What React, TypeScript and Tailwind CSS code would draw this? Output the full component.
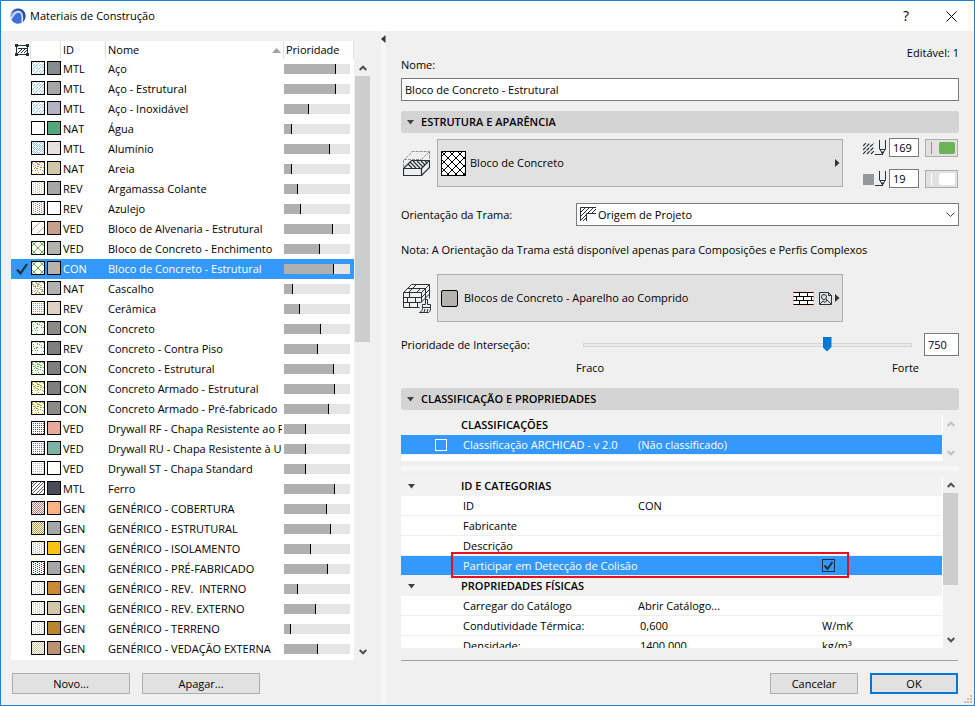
import { useState } from 'react'

type Hatch = 'none' | 'diag' | 'dense' | 'wide' | 'pairs' | 'cross' | 'dots' | 'stagger' | 'checker' | 'sand' | 'gravel' | 'specks' | 'grains'

interface Material {
    id: string
    name: string
    hatch: Hatch
    ink: string
    surface: string
    priority: number
}

const materials: Material[] = [
    { id: 'MTL', name: 'Aço', hatch: 'diag', ink: '#8fc2ee', surface: '#868c8e', priority: 51 },
    { id: 'MTL', name: 'Aço - Estrutural', hatch: 'diag', ink: '#8fc2ee', surface: '#a6a6a6', priority: 51 },
    { id: 'MTL', name: 'Aço - Inoxidável', hatch: 'diag', ink: '#8fc2ee', surface: '#b4b3c4', priority: 24 },
    { id: 'NAT', name: 'Água', hatch: 'none', ink: '#ffffff', surface: '#54a77a', priority: 7 },
    { id: 'MTL', name: 'Alumínio', hatch: 'dense', ink: '#8fc2ee', surface: '#e9e1e0', priority: 45 },
    { id: 'NAT', name: 'Areia', hatch: 'sand', ink: '#c08a3a', surface: '#d1c6a8', priority: 7 },
    { id: 'REV', name: 'Argamassa Colante', hatch: 'stagger', ink: '#c0c0a0', surface: '#a6a6a6', priority: 13 },
    { id: 'REV', name: 'Azulejo', hatch: 'stagger', ink: '#e8783c', surface: '#ffffff', priority: 16 },
    { id: 'VED', name: 'Bloco de Alvenaria - Estrutural', hatch: 'wide', ink: '#f0a070', surface: '#c4a08a', priority: 48 },
    { id: 'VED', name: 'Bloco de Concreto - Enchimento', hatch: 'cross', ink: '#6ab04c', surface: '#b4b3ad', priority: 35 },
    { id: 'CON', name: 'Bloco de Concreto - Estrutural', hatch: 'cross', ink: '#6ab04c', surface: '#b4b3ad', priority: 49 },
    { id: 'NAT', name: 'Cascalho', hatch: 'gravel', ink: '#c0a67c', surface: '#b2b2b2', priority: 8 },
    { id: 'REV', name: 'Cerâmica', hatch: 'dots', ink: '#f0824a', surface: '#dfd1c4', priority: 15 },
    { id: 'CON', name: 'Concreto', hatch: 'specks', ink: '#6ab04c', surface: '#8e8a85', priority: 36 },
    { id: 'REV', name: 'Concreto - Contra Piso', hatch: 'specks', ink: '#6ab04c', surface: '#7f7f7f', priority: 33 },
    { id: 'CON', name: 'Concreto - Estrutural', hatch: 'grains', ink: '#6ab04c', surface: '#7f7f7f', priority: 49 },
    { id: 'CON', name: 'Concreto Armado - Estrutural', hatch: 'grains', ink: '#aaaa14', surface: '#7f7f7f', priority: 50 },
    { id: 'CON', name: 'Concreto Armado - Pré-fabricado', hatch: 'grains', ink: '#aaaa14', surface: '#8e8a85', priority: 44 },
    { id: 'VED', name: 'Drywall RF - Chapa Resistente ao Fogo', hatch: 'dots', ink: '#c83232', surface: '#e8aa9b', priority: 21 },
    { id: 'VED', name: 'Drywall RU - Chapa Resistente à Umidade', hatch: 'dots', ink: '#28a878', surface: '#7db3a6', priority: 21 },
    { id: 'VED', name: 'Drywall ST - Chapa Standard', hatch: 'dots', ink: '#bebebe', surface: '#ffffff', priority: 21 },
    { id: 'MTL', name: 'Ferro', hatch: 'pairs', ink: '#606060', surface: '#4a4d58', priority: 50 },
    { id: 'GEN', name: 'GENÉRICO - COBERTURA', hatch: 'checker', ink: '#c87878', surface: '#ffb084', priority: 42 },
    { id: 'GEN', name: 'GENÉRICO - ESTRUTURAL', hatch: 'checker', ink: '#b4a03c', surface: '#a6a6a6', priority: 46 },
    { id: 'GEN', name: 'GENÉRICO - ISOLAMENTO', hatch: 'stagger', ink: '#dcb43c', surface: '#fac30f', priority: 26 },
    { id: 'GEN', name: 'GENÉRICO - PRÉ-FABRICADO', hatch: 'stagger', ink: '#783c46', surface: '#a6a6a6', priority: 43 },
    { id: 'GEN', name: 'GENÉRICO - REV.  INTERNO', hatch: 'stagger', ink: '#c8c8b4', surface: '#ca8a32', priority: 13 },
    { id: 'GEN', name: 'GENÉRICO - REV. EXTERNO', hatch: 'stagger', ink: '#c8c8a0', surface: '#d1c6a8', priority: 31 },
    { id: 'GEN', name: 'GENÉRICO - TERRENO', hatch: 'stagger', ink: '#c8c8b4', surface: '#b8872d', priority: 6 },
    { id: 'GEN', name: 'GENÉRICO - VEDAÇÃO EXTERNA', hatch: 'checker', ink: '#d2c8a0', surface: '#bc9272', priority: 33 },
]

// fixed pseudo random value per pixel, for the loose fills
const noise = (x: number, y: number) => Math.abs(Math.sin(x * 12.9 + y * 78.2) * 43758) % 1

const hatchTests: Record<Hatch, (x: number, y: number) => boolean> = {
    none: () => false,
    diag: (x, y) => (x + y) % 6 === 1 || ((x + y) % 6 === 4 && x % 3 !== 0),
    dense: (x, y) => (x + y) % 4 === 1 || ((x + y) % 4 === 3 && x % 3 !== 0),
    wide: (x, y) => (x + y) % 9 === 7,
    pairs: (x, y) => (x + y) % 7 === 1 || (x + y) % 7 === 4,
    cross: (x, y) => (x + y) % 8 === 3 || (x - y + 24) % 8 === 0,
    dots: (x, y) => x % 2 === 1 && y % 2 === 1,
    stagger: (x, y) => x % 2 === 1 && y % 2 === (x % 4 === 1 ? 0 : 1),
    checker: (x, y) => (x + y) % 2 === 0,
    sand: (x, y) => noise(x, y) < 0.22,
    gravel: (x, y) => noise(x, y) < 0.42,
    specks: (x, y) => noise(x, y) < 0.12 || (y === 5 && x > 3 && x < 6),
    grains: (x, y) => noise(x, y) < 0.27,
}

function hatchPath(kind: Hatch, size: number) {
    let d = ''
    for (let y = 0; y < size; y++) {
        for (let x = 0; x < size; x++) {
            if (hatchTests[kind](x, y)) d += `M${x + 1} ${y + 1}h1v1h-1z`
        }
    }
    return d
}

function Swatch({ hatch, ink, fill }: { hatch: Hatch; ink: string; fill: string }) {
    return (
        <svg width="14" height="14" viewBox="0 0 14 14" shapeRendering="crispEdges" aria-hidden="true">
            <rect x="0.5" y="0.5" width="13" height="13" fill={fill} stroke="#000" />
            <path d={hatchPath(hatch, 12)} fill={ink} />
        </svg>
    )
}

function Logo() {
    return (
        <svg width="16" height="16" viewBox="0 0 16 16" aria-hidden="true">
            <circle cx="8" cy="8" r="7.7" fill="#7ea2e4" />
            <path d="M7 .8C12 0 15.500 3.500 15.500 8c0 2.500-1 4.700-2.600 6C14 7.500 12.500 3.500 8.500 2.500 5.500 2 3 3.500 1.500 5.500 2.500 3 4.500 1.200 7 .8z" fill="#2c4fa3" />
            <path d="M1.800 12.200C4 7.500 6.500 5 9 4.800c2.500.2 3.200 3.500 2.300 9.800A7.600 7.600 0 0 1 1.800 12.200z" fill="#3d6fd8" />
            <path d="M.8 11C3 6.500 6 3.700 8.800 3.600c3 .2 4 3.900 3.400 10.300" fill="none" stroke="#e6edfa" strokeWidth="1.300" />
        </svg>
    )
}

function HatchHeaderIcon() {
    return (
        <svg width="14" height="12" viewBox="0 0 14 12" shapeRendering="crispEdges" aria-hidden="true">
            <path d="M0 0h3v3H0zM11 0h3v3h-3zM0 9h3v3H0zM11 9h3v3h-3zM3 1h8v1H3zM1 3h1v6H1zM12 3h1v6h-1zM3 10h8v1H3zM3 4h9v1H3z" fill="#26313a" />
            <path d="M3 9l4-4M6 9l4-4M9 9l3-3" stroke="#26313a" />
        </svg>
    )
}

function Check() {
    return (
        <svg width="12" height="12" viewBox="0 0 12 12" aria-hidden="true">
            <path d="M1 6.500l3.500 4L11 1" fill="none" stroke="#1f2f3c" strokeWidth="2.200" />
        </svg>
    )
}

function FillBlockIcon() {
    return (
        <svg width="27" height="25" viewBox="0 0 27 25" fill="none" stroke="#26313a" aria-hidden="true">
            <path d="M.5 9.500l8-8M8.500.5h18M26.500.5v8M.5 9v8M1 8.500h17M18.500 8.500l8-8" stroke="#8a9298" strokeDasharray="3 1" />
            <path d="M.5 17.500h18v7H.5zM.5 17.500l8-8h18l-8 8M26.500 9.500v7l-8 8" strokeWidth="1.200" />
            <path d="M5 13l4 4M7 11l6 6M10 10l7 7M14 10l6 6M18 10l4 4M22 10l2 2" strokeWidth="1.200" />
        </svg>
    )
}

function BrickPaintIcon() {
    return (
        <svg width="28" height="29" viewBox="0 0 28 29" fill="none" stroke="#26313a" aria-hidden="true">
            <path d="M18.500 18V8.500H.5v15h16M.5 13.500h18M.5 18.500h18M6.500 8.500v5M12.500 13.500v5M4.500 13.500v5M6.500 18.500v5M14.500 18.500v5" />
            <path d="M.5 8.500l8-8h18v14M18.500 8.500l8-8M4.500 4.500h18M13.500.5l-4 4M17.500 4.500l-4 4M9.500 4.500l-4 4M22.500 4.500v12M18.500 13.500l8-8M18.500 18l8-8" />
            <path d="M22.500 20.500v-5h2v5h3v3h-8v-3zM19.500 23.500c0 3-1 4-3 5h9c2-1 2-3 2-5M21 28l1-3M24 28l1-3" fill="#f0f0f0" />
        </svg>
    )
}

function CrossHatchPreview() {
    return (
        <svg width="25" height="25" viewBox="0 0 25 25" shapeRendering="crispEdges" aria-hidden="true">
            <rect x="0.5" y="0.5" width="24" height="24" rx="1" fill="#fff" stroke="#000" />
            <path d={hatchPath('cross', 23)} />
        </svg>
    )
}

function PenIcon({ solid }: { solid?: boolean }) {
    return (
        <svg width="24" height="15" viewBox="0 0 24 15" fill="none" stroke="#26313a" aria-hidden="true">
            {solid ? (
                <path d="M0 3h11v11H0z" fill="#93989b" stroke="none" />
            ) : (
                <path d="M0 6l3-3M0 10l7-7M0 14L11 3M4 14l7-7M8 14l3-3" strokeDasharray="4 1" strokeWidth="1.200" />
            )}
            <path d="M12 14.500h8" />
            <path d="M16.500 0v9l3 4.500 3-4.500V0M17 9.500h5" />
            <path d="M18.500 12h2l-1 2z" fill="#26313a" />
        </svg>
    )
}

function OriginIcon() {
    return (
        <svg width="16" height="14" viewBox="0 0 16 14" fill="none" stroke="#26313a" aria-hidden="true">
            <path d="M.5 14V.5H16M6.500 14V6.500H16" />
            <path d="M1 5l4-4M1 9l8-8M1 13l5-5M3 14l3-3M8 6l5-5M12 6l4-4" />
        </svg>
    )
}

function BricksIcon() {
    return (
        <svg width="21" height="15" viewBox="0 0 21 15" shapeRendering="crispEdges" aria-hidden="true">
            <rect width="21" height="15" fill="#fff" />
            <path d="M0 1.500h21M0 5.500h21M0 9.500h21M0 13.500h21M6.500 1v4M14.500 1v4M3.500 5v4M10.500 5v4M18.500 5v4M6.500 9v4M14.500 9v4" stroke="#000" />
            <path d="M.5.500h20v14H.5z" fill="none" stroke="#ff9c9c" strokeOpacity="0.5" />
        </svg>
    )
}

function TextureIcon() {
    return (
        <svg width="13" height="13" viewBox="0 0 13 13" fill="none" stroke="#26313a" aria-hidden="true">
            <path d="M.5.500h9l3 3v9H.5zM9.500.500v3h3" />
            <circle cx="5" cy="5" r="2.500" />
            <path d="M1 12l3-3 2 1.500L8 8l4 4M7 7l2 2" />
        </svg>
    )
}

function Triangle({ dir }: { dir: 'down' | 'right' | 'left' | 'up' }) {
    if (dir === 'right') {
        return <svg width="5" height="8" viewBox="0 0 5 8" aria-hidden="true"><path d="M0 0l4.500 4L0 8z" fill="#333" /></svg>
    }
    if (dir === 'left') {
        return <svg width="5" height="8" viewBox="0 0 5 8" aria-hidden="true"><path d="M4.500 0L0 4l4.500 4z" fill="#333" /></svg>
    }
    if (dir === 'up') {
        return <svg width="9" height="5" viewBox="0 0 9 5" aria-hidden="true"><path d="M0 5l4.500-5L9 5z" fill="#a0a0a0" /></svg>
    }
    return <svg width="7" height="5" viewBox="0 0 7 5" aria-hidden="true"><path d="M0 0h7L3.500 4.500z" fill="#404040" /></svg>
}

function ScrollArrow({ up, muted, label }: { up?: boolean; muted?: boolean; label: string }) {
    return (
        <button type="button" aria-label={label} className="flex h-4 w-full shrink-0 items-center justify-center">
            <svg width="8" height="6" viewBox="0 0 8 6" fill="none" stroke={muted ? '#bfbfbf' : '#505050'} strokeWidth="2" aria-hidden="true">
                <path d={up ? 'M.7 5L4 1.700 7.300 5' : 'M.7 1L4 4.300 7.300 1'} />
            </svg>
        </button>
    )
}

function SectionHeader({ title }: { title: string }) {
    return (
        <h2 className="flex h-[22px] items-center gap-[7px] rounded-[3px] bg-[#d4d4d4] pl-[6px] font-semibold">
            <Triangle dir="down" />
            {title}
        </h2>
    )
}

function MaterialList({ selected, onSelect }: { selected: number; onSelect: (i: number) => void }) {
    return (
        <div className="flex">
            <div className="w-[343px] bg-white pb-px">
                <table className="w-full table-fixed border-separate border-spacing-0">
                    <colgroup>
                        <col className="w-5" />
                        <col className="w-[30px]" />
                        <col className="w-[45px]" />
                        <col className="w-[178px]" />
                        <col className="w-[70px]" />
                    </colgroup>
                    <thead>
                        <tr className="h-[18px] text-left leading-[18px]">
                            <th aria-label="Trama" className="border-r border-[#e0e0e0] p-0">
                                <div className="flex justify-end pr-px"><HatchHeaderIcon /></div>
                            </th>
                            <th aria-label="Superfície" className="border-r border-[#e0e0e0] p-0" />
                            <th className="border-r border-[#e0e0e0] p-0 pl-[2px] font-normal">ID</th>
                            <th className="border-r border-[#e0e0e0] p-0 pl-[2px] font-normal">
                                <div className="flex items-center justify-between pr-[2px]">Nome <Triangle dir="up" /></div>
                            </th>
                            <th className="border-r border-[#e0e0e0] p-0 pl-[2px] font-normal">Prioridade</th>
                        </tr>
                    </thead>
                    <tbody>
                        {materials.map((m, i) => (
                            <tr
                                key={m.name}
                                onClick={() => onSelect(i)}
                                aria-selected={i === selected}
                                className={i === selected ? 'h-5 bg-[#3399ff] text-white' : 'h-5'}
                            >
                                <td className="p-0">{i === selected && <div className="flex justify-center pl-[2px]"><Check /></div>}</td>
                                <td className="p-0">
                                    <div className="-mt-[2px] flex gap-[2px]">
                                        <Swatch hatch={m.hatch} ink={m.ink} fill="#ffffff" />
                                        <Swatch hatch="none" ink={m.ink} fill={m.surface} />
                                    </div>
                                </td>
                                <td className="p-0 pl-[2px] leading-5">{m.id}</td>
                                <td className="p-0 pr-[2px] pl-[2px] leading-5">
                                    <div className="overflow-hidden whitespace-pre">{m.name}</div>
                                </td>
                                <td className="p-0">
                                    <div className="flex h-[10px] w-[66px] bg-[#e5e5e5]">
                                        <div className="border-r border-black bg-[#b0b0b0]" style={{ width: m.priority + 1 }} />
                                    </div>
                                </td>
                            </tr>
                        ))}
                    </tbody>
                </table>
            </div>
            <div className="ml-px flex w-[15px] flex-col pt-[19px]">
                <ScrollArrow up label="Rolar lista para cima" />
                <div className="h-[266px] bg-[#cdcdcd]" />
                <div className="flex-1" />
                <ScrollArrow label="Rolar lista para baixo" />
            </div>
        </div>
    )
}

function GroupRow({ title, arrow = true }: { title: string; arrow?: boolean }) {
    return (
        <tr className="h-5 bg-[#f2f2f2]">
            <td className="p-0 pl-[7px]">{arrow && <Triangle dir="down" />}</td>
            <th colSpan={3} className="p-0 text-left leading-5 font-semibold">{title}</th>
        </tr>
    )
}

function PropertyRow({ label, value, unit }: { label: string; value?: string; unit?: React.ReactNode }) {
    return (
        <tr className="h-5 leading-[19px]">
            <td className="border-b border-[#efefef] p-0" />
            <td className="border-b border-[#efefef] p-0 pl-[2px]">{label}</td>
            <td className={unit ? 'border-b border-[#efefef] p-0 pl-[2px]' : 'border-b border-[#efefef] p-0'}>{value}</td>
            <td className="border-b border-[#efefef] p-0">{unit}</td>
        </tr>
    )
}

function PropertyCols() {
    return (
        <colgroup>
            <col className="w-[60px]" />
            <col className="w-[177px]" />
            <col className="w-[184px]" />
            <col />
        </colgroup>
    )
}

function PushButton({ children, className }: { children: string; className: string }) {
    return (
        <button type="button" className={`h-[21px] bg-[#e1e1e1] text-center leading-none ${className}`}>
            {children}
        </button>
    )
}

export default function App() {
    const [selected, setSelected] = useState(10)
    const [name, setName] = useState('Bloco de Concreto - Estrutural')
    const [priority, setPriority] = useState(750)
    const [collision, setCollision] = useState(true)

    return (
        <div className="relative flex min-h-screen flex-col border border-[#1883d7] bg-[#f0f0f0] font-['Open_Sans','Noto_Sans',sans-serif] text-[11px] leading-4 text-black">
            <header className="flex h-[30px] items-center bg-white pl-[9px]">
                <Logo />
                <h1 className="ml-[4px] flex-1">Materiais de Construção</h1>
                <button type="button" aria-label="Ajuda" className="w-[46px] text-center text-sm">?</button>
                <button type="button" aria-label="Fechar" className="flex w-[45px] justify-center">
                    <svg width="11" height="11" viewBox="0 0 11 11" stroke="#000" aria-hidden="true">
                        <path d="M.5.500l10 10M10.500.500l-10 10" />
                    </svg>
                </button>
            </header>

            <div className="flex flex-1">
                <aside className="w-[380px] shrink-0 pt-[10px] pl-[10px]">
                    <MaterialList selected={selected} onSelect={setSelected} />
                    <div className="mt-[13px] flex gap-3 pl-px">
                        <PushButton className="w-[118px] border border-[#adadad]">Novo...</PushButton>
                        <PushButton className="w-[118px] border border-[#adadad]">Apagar...</PushButton>
                    </div>
                </aside>

                <div className="w-[5px] shrink-0 bg-[#f6f6f6] pt-1">
                    <Triangle dir="left" />
                </div>

                <main className="min-w-0 flex-1 pt-[14px] pr-[15px] pb-[11px] pl-[15px]">
                    <div className="flex items-start justify-between">
                        <label htmlFor="name" className="pt-3">Nome:</label>
                        <span>Editável: 1</span>
                    </div>
                    <input
                        id="name"
                        value={name}
                        onChange={e => setName(e.target.value)}
                        className="mt-[5px] block h-[23px] w-full border border-[#7a7a7a] bg-white px-[3px] outline-none"
                    />

                    <div className="mt-[10px]">
                        <SectionHeader title="ESTRUTURA E APARÊNCIA" />
                    </div>

                    <div className="mt-[5px] flex h-[50px] items-center">
                        <div className="w-9 shrink-0 pl-[2px]"><FillBlockIcon /></div>
                        <button type="button" className="flex h-12 flex-1 items-center border border-[#adadad] bg-[#e1e1e1] pr-[2px] pl-[3px] text-left">
                            <CrossHatchPreview />
                            <span className="ml-1 flex-1">Bloco de Concreto</span>
                            <Triangle dir="right" />
                        </button>
                        <div className="ml-5 flex h-full w-24 flex-col justify-between">
                            <div className="flex items-center">
                                <PenIcon />
                                <input aria-label="Caneta da trama" defaultValue="169" className="ml-[2px] h-[19px] w-[30px] border border-[#7a7a7a] bg-white pl-[3px] outline-none" />
                                <button type="button" aria-label="Cor da caneta da trama" className="ml-[6px] flex h-[18px] w-[33px] items-center border border-[#adadad] bg-[#e1e1e1] pl-[5px]">
                                    <span className="h-3 w-px bg-[#6bb356]" />
                                    <span className="ml-[7px] h-3 w-4 rounded-[2px] bg-[#6bb356]" />
                                </button>
                            </div>
                            <div className="flex items-center">
                                <PenIcon solid />
                                <input aria-label="Caneta de fundo" defaultValue="19" className="ml-[2px] h-[19px] w-[30px] border border-[#7a7a7a] bg-white pl-[3px] outline-none" />
                                <button type="button" aria-label="Cor da caneta de fundo" className="ml-[6px] flex h-[18px] w-[33px] items-center border border-[#adadad] bg-[#e1e1e1] pl-[5px]">
                                    <span className="h-3 w-px bg-white" />
                                    <span className="ml-[7px] h-3 w-4 rounded-[2px] bg-white" />
                                </button>
                            </div>
                        </div>
                    </div>

                    <div className="mt-[15px] flex items-center">
                        <label htmlFor="orientation" className="w-[175px] shrink-0">Orientação da Trama:</label>
                        <div className="relative flex-1">
                            <select id="orientation" className="block h-[23px] w-full appearance-none border border-[#7a7a7a] bg-white pl-[21px] outline-none">
                                <option>Origem de Projeto</option>
                            </select>
                            <span className="pointer-events-none absolute top-1 left-1"><OriginIcon /></span>
                            <svg className="pointer-events-none absolute top-[9px] right-1" width="9" height="6" viewBox="0 0 9 6" fill="none" stroke="#404040" aria-hidden="true">
                                <path d="M.5.500l4 4 4-4" />
                            </svg>
                        </div>
                    </div>

                    <p className="mt-4">Nota: A Orientação da Trama está disponível apenas para Composições e Perfis Complexos</p>

                    <div className="mt-4 flex items-center pr-[116px]">
                        <div className="w-9 shrink-0 pl-[2px]"><BrickPaintIcon /></div>
                        <button type="button" className="flex h-12 flex-1 items-center border border-[#adadad] bg-[#e1e1e1] pr-[2px] pl-[3px] text-left">
                            <span className="h-[17px] w-[17px] rounded-[2px] border border-black bg-[#b4b3ad]" />
                            <span className="ml-[6px] flex-1">Blocos de Concreto - Aparelho ao Comprido</span>
                            <span className="flex items-center gap-[3px]">
                                <span className="mr-[2px]"><BricksIcon /></span>
                                <TextureIcon />
                                <Triangle dir="right" />
                            </span>
                        </button>
                    </div>

                    <div className="mt-[11px] flex items-center">
                        <label htmlFor="priority" className="w-[182px] shrink-0">Prioridade de Interseção:</label>
                        <input
                            id="priority"
                            type="range"
                            min="0"
                            max="1000"
                            value={priority}
                            onChange={e => setPriority(Number(e.target.value))}
                            className="h-[15px] min-w-0 flex-1 appearance-none bg-transparent [&::-webkit-slider-runnable-track]:h-1 [&::-webkit-slider-runnable-track]:border [&::-webkit-slider-runnable-track]:border-[#d6d6d6] [&::-webkit-slider-runnable-track]:bg-[#e7eaea] [&::-webkit-slider-thumb]:-mt-[7px] [&::-webkit-slider-thumb]:h-[15px] [&::-webkit-slider-thumb]:w-[9px] [&::-webkit-slider-thumb]:appearance-none [&::-webkit-slider-thumb]:bg-[#0078d7] [&::-webkit-slider-thumb]:[clip-path:polygon(0_0,100%_0,100%_70%,50%_100%,0_70%)]"
                        />
                        <input
                            aria-label="Valor da prioridade"
                            value={priority}
                            onChange={e => setPriority(Number(e.target.value) || 0)}
                            className="ml-3 h-[23px] w-[35px] border border-[#7a7a7a] bg-white pl-[3px] outline-none"
                        />
                    </div>
                    <div className="mt-1 flex justify-between pr-[40px] pl-[175px]">
                        <span>Fraco</span>
                        <span>Forte</span>
                    </div>

                    <div className="mt-3">
                        <SectionHeader title="CLASSIFICAÇÃO E PROPRIEDADES" />
                    </div>

                    <div className="mt-[5px] flex pr-px">
                        <div className="flex-1 bg-white pr-px pb-[6px]">
                            <table className="w-full table-fixed border-separate border-spacing-0">
                                <PropertyCols />
                                <tbody>
                                    <GroupRow title="CLASSIFICAÇÕES" arrow={false} />
                                    <tr className="h-5 leading-[19px] text-white">
                                        <td className="border-b border-[#efefef] bg-[#3399ff] p-0">
                                            <input id="archicad" type="checkbox" className="ml-[34px] block h-3 w-3 appearance-none border border-white" />
                                        </td>
                                        <td className="border-b border-[#efefef] bg-[#3399ff] p-0 pl-[2px]">
                                            <label htmlFor="archicad">Classificação ARCHICAD - v 2.0</label>
                                        </td>
                                        <td colSpan={2} className="border-b border-[#efefef] bg-[#3399ff] p-0">(Não classificado)</td>
                                    </tr>
                                </tbody>
                            </table>
                        </div>
                        <div className="flex w-[15px] flex-col justify-between pt-px">
                            <ScrollArrow up muted label="Rolar classificações para cima" />
                            <ScrollArrow muted label="Rolar classificações para baixo" />
                        </div>
                    </div>

                    <div className="mt-[5px] h-[5px] bg-[#f6f6f6]" />

                    <div className="relative mt-[5px] flex h-[172px] pr-px">
                        <div className="flex-1 overflow-hidden bg-white pr-px">
                            <table className="w-full table-fixed border-separate border-spacing-0">
                                <PropertyCols />
                                <tbody>
                                    <GroupRow title="ID E CATEGORIAS" />
                                    <PropertyRow label="ID" value="CON" />
                                    <PropertyRow label="Fabricante" />
                                    <PropertyRow label="Descrição" />
                                    <tr className="h-5 leading-[19px] text-white">
                                        <td className="border-b border-[#efefef] bg-[#3399ff] p-0" />
                                        <td colSpan={2} className="border-b border-[#efefef] bg-[#3399ff] p-0 pl-[2px]">
                                            <label htmlFor="collision">Participar em Detecção de Colisão</label>
                                        </td>
                                        <td className="border-b border-[#efefef] bg-[#3399ff] p-0">
                                            <div className="relative h-[13px] w-[13px]">
                                                <input
                                                    id="collision"
                                                    type="checkbox"
                                                    checked={collision}
                                                    onChange={e => setCollision(e.target.checked)}
                                                    className="block h-[13px] w-[13px] appearance-none border border-[#1f2f3c]"
                                                />
                                                {collision && (
                                                    <svg className="pointer-events-none absolute top-0 left-0" width="13" height="13" viewBox="0 0 13 13" fill="none" stroke="#1f2f3c" strokeWidth="2" aria-hidden="true">
                                                        <path d="M2.500 6.500l3 3.500 5-7" />
                                                    </svg>
                                                )}
                                            </div>
                                        </td>
                                    </tr>
                                    <GroupRow title="PROPRIEDADES FÍSICAS" />
                                    <PropertyRow label="Carregar do Catálogo" value="Abrir Catálogo..." />
                                    <PropertyRow label="Condutividade Térmica:" value="0,600" unit="W/mK" />
                                    <PropertyRow label="Densidade:" value="1400,000" unit="kg/m³" />
                                </tbody>
                            </table>
                        </div>
                        <div className="flex w-[15px] flex-col pt-px">
                            <ScrollArrow up label="Rolar propriedades para cima" />
                            <div className="h-[92px] bg-[#cdcdcd]" />
                            <div className="flex-1" />
                            <ScrollArrow label="Rolar propriedades para baixo" />
                        </div>
                        <div className="pointer-events-none absolute top-[76px] right-[110px] left-[50px] h-[26px] border-2 border-[#e8101c]" />
                    </div>

                    <div className="mt-3 mr-px border-t border-[#a0a0a0]" />
                    <div className="mt-3 mr-px flex justify-end gap-3">
                        <PushButton className="w-[88px] border border-[#adadad]">Cancelar</PushButton>
                        <PushButton className="w-[88px] border-2 border-[#0078d7]">OK</PushButton>
                    </div>
                </main>
            </div>

            <svg className="absolute right-[2px] bottom-[2px]" width="8" height="8" viewBox="0 0 8 8" fill="#bfbfbf" aria-hidden="true">
                <path d="M6 0h2v2H6zM3 3h2v2H3zM6 3h2v2H6zM0 6h2v2H0zM3 6h2v2H3zM6 6h2v2H6z" />
            </svg>
        </div>
    )
}
